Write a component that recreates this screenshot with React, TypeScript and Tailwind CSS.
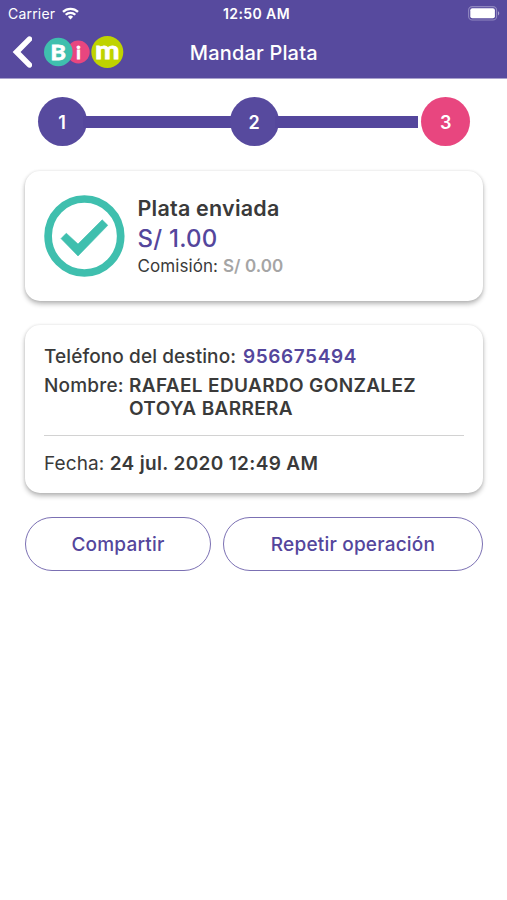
import type { ReactNode } from 'react'

function StatusBar() {
    return (
        <div className="grid h-[27px] grid-cols-3 items-center pl-2 pr-[7px] text-[14px] text-white">
            <div className="flex items-center gap-[7px]">
                <span className="tracking-[0.2px]">Carrier</span>
                <svg className="-mt-px" width="17" height="13" viewBox="0 0 17 13" fill="none" stroke="white" strokeWidth="2.3">
                    <path d="M1 4.9a10.6 10.6 0 0 1 15 0" />
                    <path d="M3.7 7.8a6.8 6.8 0 0 1 9.6 0" />
                    <path d="M8.5 12.4 5.9 9.8a3.7 3.7 0 0 1 5.2 0Z" fill="white" stroke="none" />
                </svg>
            </div>
            <span className="ml-[5px] whitespace-nowrap text-center text-[14px] font-semibold tracking-[0.4px]">12:50 AM</span>
            <svg className="-mt-px justify-self-end" width="32" height="15" viewBox="0 0 32 15">
                <rect x="0.6" y="0.6" width="28" height="13.4" rx="3.6" fill="none" stroke="#8f86bf" strokeWidth="1.1" />
                <rect x="2.3" y="2.3" width="24.6" height="10" rx="2" fill="white" />
                <path d="M30 5.2c1.7.7 1.7 3.5 0 4.2Z" fill="#a9a2cf" />
            </svg>
        </div>
    )
}

function Logo() {
    return (
        <svg className="overflow-visible font-['Lato',sans-serif] font-bold" width="80" height="32" viewBox="0 0 80 32" fill="white" stroke="white" strokeWidth="0.8">
            <g stroke="none">
                <circle cx="34.3" cy="16" r="11.4" fill="#e8467f" />
                <circle cx="14.3" cy="16" r="14.3" fill="#3fbfae" />
                <circle cx="63.3" cy="16" r="16" fill="#bfd300" />
            </g>
            <text x="6.4" y="23.6" fontSize="20" textLength="15.4" lengthAdjust="spacingAndGlyphs">B</text>
            <text x="34.4" y="23" fontSize="17.5" textAnchor="middle">i</text>
            <text x="51" y="23" fontSize="25" textLength="24.6" lengthAdjust="spacingAndGlyphs">m</text>
        </svg>
    )
}

function Header() {
    return (
        <header className="h-[79px] border-b border-[#a8a1cd] bg-[#574a9e]">
            <StatusBar />
            <div className="grid h-[50px] grid-cols-[1fr_auto_1fr] items-center pl-3">
                <div className="flex items-center gap-3">
                    <svg width="20" height="32" viewBox="0 0 20 32" fill="none" stroke="white" strokeWidth="5.6">
                        <path d="M17.4 3.1 4.6 16l12.8 12.9" strokeLinecap="round" />
                    </svg>
                    <Logo />
                </div>
                <h1 className="-ml-[11.5px] pt-px text-[20px] font-medium tracking-[0.18px] text-white">Mandar Plata</h1>
            </div>
        </header>
    )
}

function Step({ number, active }: { number: number, active?: boolean }) {
    return (
        <div className={`flex size-[49px] shrink-0 items-center justify-center rounded-full pt-px text-[18px] font-semibold text-white ${active ? 'ml-[3px] bg-[#e8467f]' : 'bg-[#574a9e]'}`}>
            {number}
        </div>
    )
}

function Steps() {
    return (
        <div className="mt-[18.4px] flex items-center pl-[37.5px]">
            <Step number={1} />
            <div className="-mx-1 h-[12.5px] w-[151px] shrink-0 bg-[#54469c]" />
            <Step number={2} />
            <div className="-ml-1 h-[12.5px] w-[143.7px] shrink-0 bg-[#54469c]" />
            <Step number={3} active />
        </div>
    )
}

function Card({ children, className }: { children: ReactNode, className: string }) {
    return (
        <section className={`ml-[25px] mr-6 rounded-[15px] bg-white shadow-[0_3px_5px_rgba(0,0,0,0.28),0_0_3px_rgba(0,0,0,0.1)] ${className}`}>
            {children}
        </section>
    )
}

function App() {
    return (
        <div className="min-h-screen bg-white font-['Inter',sans-serif] text-[#3a3a3a]">
            <Header />
            <main>
                <Steps />

                <Card className="mt-[24.6px] flex h-[130px] items-center gap-[12.5px] pl-[19px]">
                    <svg width="81" height="82" viewBox="0 0 81 82">
                        <ellipse cx="40.4" cy="41" rx="36.3" ry="37" fill="none" stroke="#3fbfae" strokeWidth="7.7" />
                        <path d="M17 43.6 22.3 38.2 34 49 58.2 24.8 63.8 30.3 34 61Z" fill="#3fbfae" stroke="#3fbfae" strokeWidth="0.6" strokeLinejoin="round" />
                    </svg>
                    <div className="whitespace-nowrap">
                        <h2 className="text-[21.5px] font-semibold leading-[30px] tracking-[0.22px]">Plata enviada</h2>
                        <p className="text-[24px] font-medium leading-[31px] tracking-[0.25px] text-[#54469c]">S/ 1.00</p>
                        <p className="text-[17px] leading-6 tracking-[0.08px]">
                            Comisión: <span className="font-semibold text-[#a5a5a5]">S/ 0.00</span>
                        </p>
                    </div>
                </Card>

                <Card className="mt-6 h-[168px] px-[19px] pt-[18px] text-[19px]">
                    <p className="whitespace-nowrap leading-[27px]">
                        <span className="mr-[1.5px] font-medium tracking-[0.1px]">Teléfono del destino:</span>{' '}
                        <span className="font-semibold tracking-[0.6px] text-[#54469c]">956675494</span>
                    </p>
                    <div className="mt-1 flex gap-[5px] leading-[23px]">
                        <span className="w-20 shrink-0 font-medium tracking-[0.2px]">Nombre:</span>
                        <span className="whitespace-nowrap font-semibold tracking-[0.36px]">
                            RAFAEL EDUARDO GONZALEZ<br />OTOYA BARRERA
                        </span>
                    </div>
                    <hr className="mt-[15px] border-[#d2d2d2]" />
                    <p className="mt-[15px] whitespace-nowrap leading-[26px]">
                        <span className="tracking-[0.1px]">Fecha:</span>{' '}
                        <span className="font-semibold tracking-[0.34px]">24 jul. 2020 12:49 AM</span>
                    </p>
                </Card>

                <div className="ml-[25px] mr-6 mt-6 flex gap-3 text-[19px] font-medium tracking-[0.2px] text-[#54469c]">
                    <button className="h-[54px] w-[186px] rounded-[27px] border-[1.5px] border-[#7b70b3] pt-0.5">Compartir</button>
                    <button className="h-[54px] flex-1 rounded-[27px] border-[1.5px] border-[#7b70b3] pt-0.5">Repetir operación</button>
                </div>
            </main>
        </div>
    )
}

export default App
